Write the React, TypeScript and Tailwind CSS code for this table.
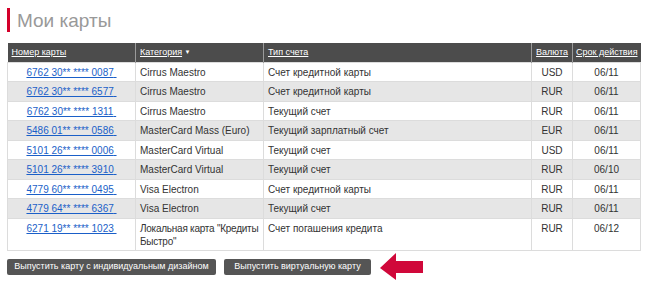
import React from "react";

const rows = [
  { num: "6762 30** **** 0087", cat: "Cirrus Maestro", type: "Счет кредитной карты", cur: "USD", exp: "06/11" },
  { num: "6762 30** **** 6577", cat: "Cirrus Maestro", type: "Счет кредитной карты", cur: "RUR", exp: "06/11" },
  { num: "6762 30** **** 1311", cat: "Cirrus Maestro", type: "Текущий счет", cur: "RUR", exp: "06/11" },
  { num: "5486 01** **** 0586", cat: "MasterCard Mass (Euro)", type: "Текущий зарплатный счет", cur: "EUR", exp: "06/11" },
  { num: "5101 26** **** 0006", cat: "MasterCard Virtual", type: "Текущий счет", cur: "USD", exp: "06/11" },
  { num: "5101 26** **** 3910", cat: "MasterCard Virtual", type: "Текущий счет", cur: "RUR", exp: "06/10" },
  { num: "4779 60** **** 0495", cat: "Visa Electron", type: "Счет кредитной карты", cur: "RUR", exp: "06/11" },
  { num: "4779 64** **** 6367", cat: "Visa Electron", type: "Текущий счет", cur: "RUR", exp: "06/11" },
];

const td = "align-top px-[4px] pt-[3px] pb-[2.5px] border border-[#dcdcdc]";

export default function App() {
  return (
    <div
      className="w-[650px] h-[285px] bg-white overflow-hidden pt-[8px] pl-[7px] text-[#333]"
      style={{ fontFamily: '"Liberation Sans", Arial, sans-serif' }}
    >
      <div className="flex items-center h-[24px]">
        <div className="w-[3px] h-[24px] bg-[#d4002a]" />
        <h1 className="ml-[7px] text-[19px] leading-none text-[#999]">Мои карты</h1>
      </div>

      <table className="mt-[11px] w-[633px] border-collapse text-[10px] leading-[13px] table-fixed">
        <colgroup>
          <col className="w-[128px]" />
          <col className="w-[128px]" />
          <col className="w-[268px]" />
          <col className="w-[41px]" />
          <col className="w-[68px]" />
        </colgroup>
        <thead>
          <tr className="bg-[#4c4c4c] text-white h-[19px] whitespace-nowrap text-[9px]">
            <th className="font-normal text-left px-[4px] border-r border-[#9a9a9a]"><span className="underline">Номер карты</span></th>
            <th className="font-normal text-left px-[4px] border-r border-[#9a9a9a]"><span className="underline">Категория</span> <span className="text-[6px] align-middle">▼</span></th>
            <th className="font-normal text-left px-[4px] border-r border-[#9a9a9a]"><span className="underline">Тип счета</span></th>
            <th className="font-normal text-center px-[2px] border-r border-[#9a9a9a]"><span className="underline">Валюта</span></th>
            <th className="font-normal text-center px-[2px]"><span className="underline">Срок действия</span></th>
          </tr>
        </thead>
        <tbody>
          {rows.map((r, i) => (
            <tr key={i} className={i % 2 === 1 ? "bg-[#e6e6e6]" : "bg-white"}>
              <td className={`${td} text-center`}>
                <a href="#" className="text-[#1a5fc8] underline">{r.num}&nbsp;</a>
              </td>
              <td className={td}>{r.cat}</td>
              <td className={td}>{r.type}</td>
              <td className={`${td} text-center`}>{r.cur}</td>
              <td className={`${td} text-center`}>{r.exp}</td>
            </tr>
          ))}
          <tr className="bg-white">
            <td className={`${td} text-center`}>
              <a href="#" className="text-[#1a5fc8] underline">6271 19** **** 1023&nbsp;</a>
            </td>
            <td className={`${td} whitespace-nowrap tracking-[-0.25px] !pr-0`}>
              Локальная карта "Кредиты
              <br />
              Быстро"
            </td>
            <td className={td}>Счет погашения кредита</td>
            <td className={`${td} text-center`}>RUR</td>
            <td className={`${td} text-center`}>06/12</td>
          </tr>
        </tbody>
      </table>

      <div className="flex items-center mt-[2px] gap-[8px]">
        <button className="w-[209px] h-[16px] bg-[#555] text-white text-[9px] leading-none rounded-[2px] whitespace-nowrap">
          Выпустить карту с индивидуальным дизайном
        </button>
        <button className="w-[147px] h-[16px] bg-[#555] text-white text-[9px] leading-none rounded-[2px] whitespace-nowrap">
          Выпустить виртуальную карту
        </button>
        <svg width="44" height="27" viewBox="0 0 44 27" className="ml-[1px]">
          <polygon points="0,15 16,0 16,8 43,8 43,20 16,20 16,27" fill="#d0083a" />
        </svg>
      </div>
    </div>
  );
}
